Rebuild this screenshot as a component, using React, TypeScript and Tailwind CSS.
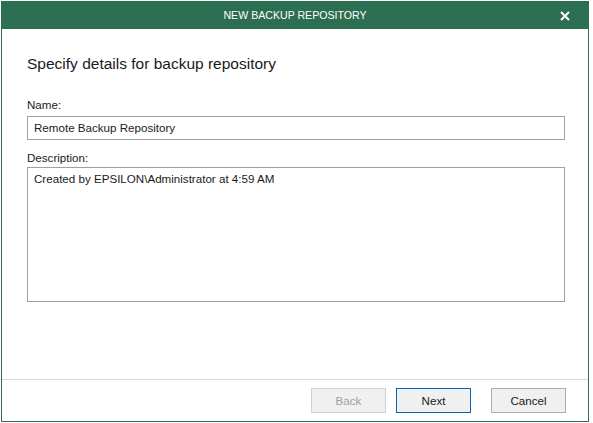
import React from 'react';

const font = { fontFamily: '"Liberation Sans", Arial, sans-serif' };

function Button({ label, variant }: { label: string; variant?: 'default' | 'disabled' }) {
  const border =
    variant === 'default'
      ? 'border-[#0067c0]'
      : variant === 'disabled'
        ? 'border-[#d0d0d0] text-[#a0a0a0]'
        : 'border-[#adadad]';
  return (
    <button
      className={`w-[75px] h-[25px] border bg-[#f0f0f0] text-[11.6px] leading-none text-[#1a1a1a] ${border}`}
      disabled={variant === 'disabled'}
    >
      {label}
    </button>
  );
}

export default function App() {
  return (
    <div className="w-[593px] h-[423px] bg-white pt-[1px] pl-[1px]" style={font}>
      <div className="w-[588px] h-[421px] border border-[#2c6e51] flex flex-col bg-white">
        {/* Title bar */}
        <header className="h-[27px] bg-[#2c6e51] grid grid-cols-[1fr_auto_1fr] items-center text-white">
          <div />
          <div className="text-[10.6px]">NEW BACKUP REPOSITORY</div>
          <div className="flex justify-end pr-[18px]">
            <svg width="10" height="10" viewBox="0 0 10 10" className="mt-[1px]">
              <path d="M1 1 L9 9 M9 1 L1 9" stroke="white" strokeWidth="2" />
            </svg>
          </div>
        </header>

        {/* Body */}
        <main className="flex-1 px-[25px] pt-[25px] text-[#1a1a1a]">
          <h1 className="text-[15.5px] leading-[20px] font-normal">Specify details for backup repository</h1>

          <div className="mt-[23px] text-[11.6px] leading-[16px]">Name:</div>
          <div className="mt-[3px] w-[538px] h-[24px] border border-[#a0a0a0] flex items-center px-[6px] text-[11.6px]">
            Remote Backup Repository
          </div>

          <div className="mt-[10px] text-[11.6px] leading-[16px]">Description:</div>
          <div className="mt-[1px] w-[538px] h-[135px] border border-[#a0a0a0] px-[6px] pt-[3px] text-[11.6px] leading-[16px]">
            Created by EPSILON\Administrator at 4:59 AM
          </div>
        </main>

        {/* Footer */}
        <footer className="h-[42px] border-t border-[#d9d9d9] flex items-start justify-end pt-[8px] pr-[22px]">
          <div className="flex">
            <Button label="Back" variant="disabled" />
            <div className="w-[10px]" />
            <Button label="Next" variant="default" />
            <div className="w-[20px]" />
            <Button label="Cancel" />
          </div>
        </footer>
      </div>
    </div>
  );
}
